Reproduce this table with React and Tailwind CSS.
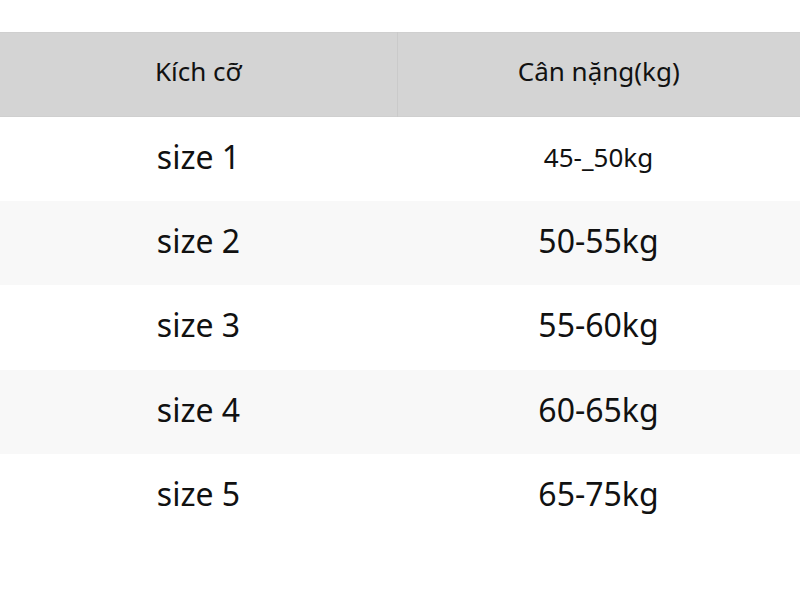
const rows = [
    { size: "size 1", weight: "45-_50kg", small: true },
    { size: "size 2", weight: "50-55kg" },
    { size: "size 3", weight: "55-60kg" },
    { size: "size 4", weight: "60-65kg" },
    { size: "size 5", weight: "65-75kg" },
];

export default function App() {
    return (
        <div className="bg-white min-h-screen pt-8 text-[#111]" style={{ fontFamily: '"Noto Sans", "Open Sans", sans-serif' }}>
            <table className="w-full border-collapse">
                <thead>
                    <tr className="bg-[#d4d4d4] border-y border-[#cfcfcf]">
                        <th className="w-[397px] h-[84px] pb-2 font-normal text-[26px] leading-none border-r border-[#cacaca]">Kích cỡ</th>
                        <th className="h-[84px] pb-2 font-normal text-[26px] leading-none">Cân nặng(kg)</th>
                    </tr>
                </thead>
                <tbody>
                    {rows.map((r, i) => (
                        <tr key={r.size} className={i % 2 === 1 ? "bg-[#f8f8f8]" : "bg-white"}>
                            <td className="h-[84.4px] pb-1 text-center text-[32px] leading-none">{r.size}</td>
                            <td className={`h-[84.4px] pb-1 text-center leading-none ${r.small ? "text-[26px]" : "text-[32px]"}`}>{r.weight}</td>
                        </tr>
                    ))}
                </tbody>
            </table>
        </div>
    );
}
